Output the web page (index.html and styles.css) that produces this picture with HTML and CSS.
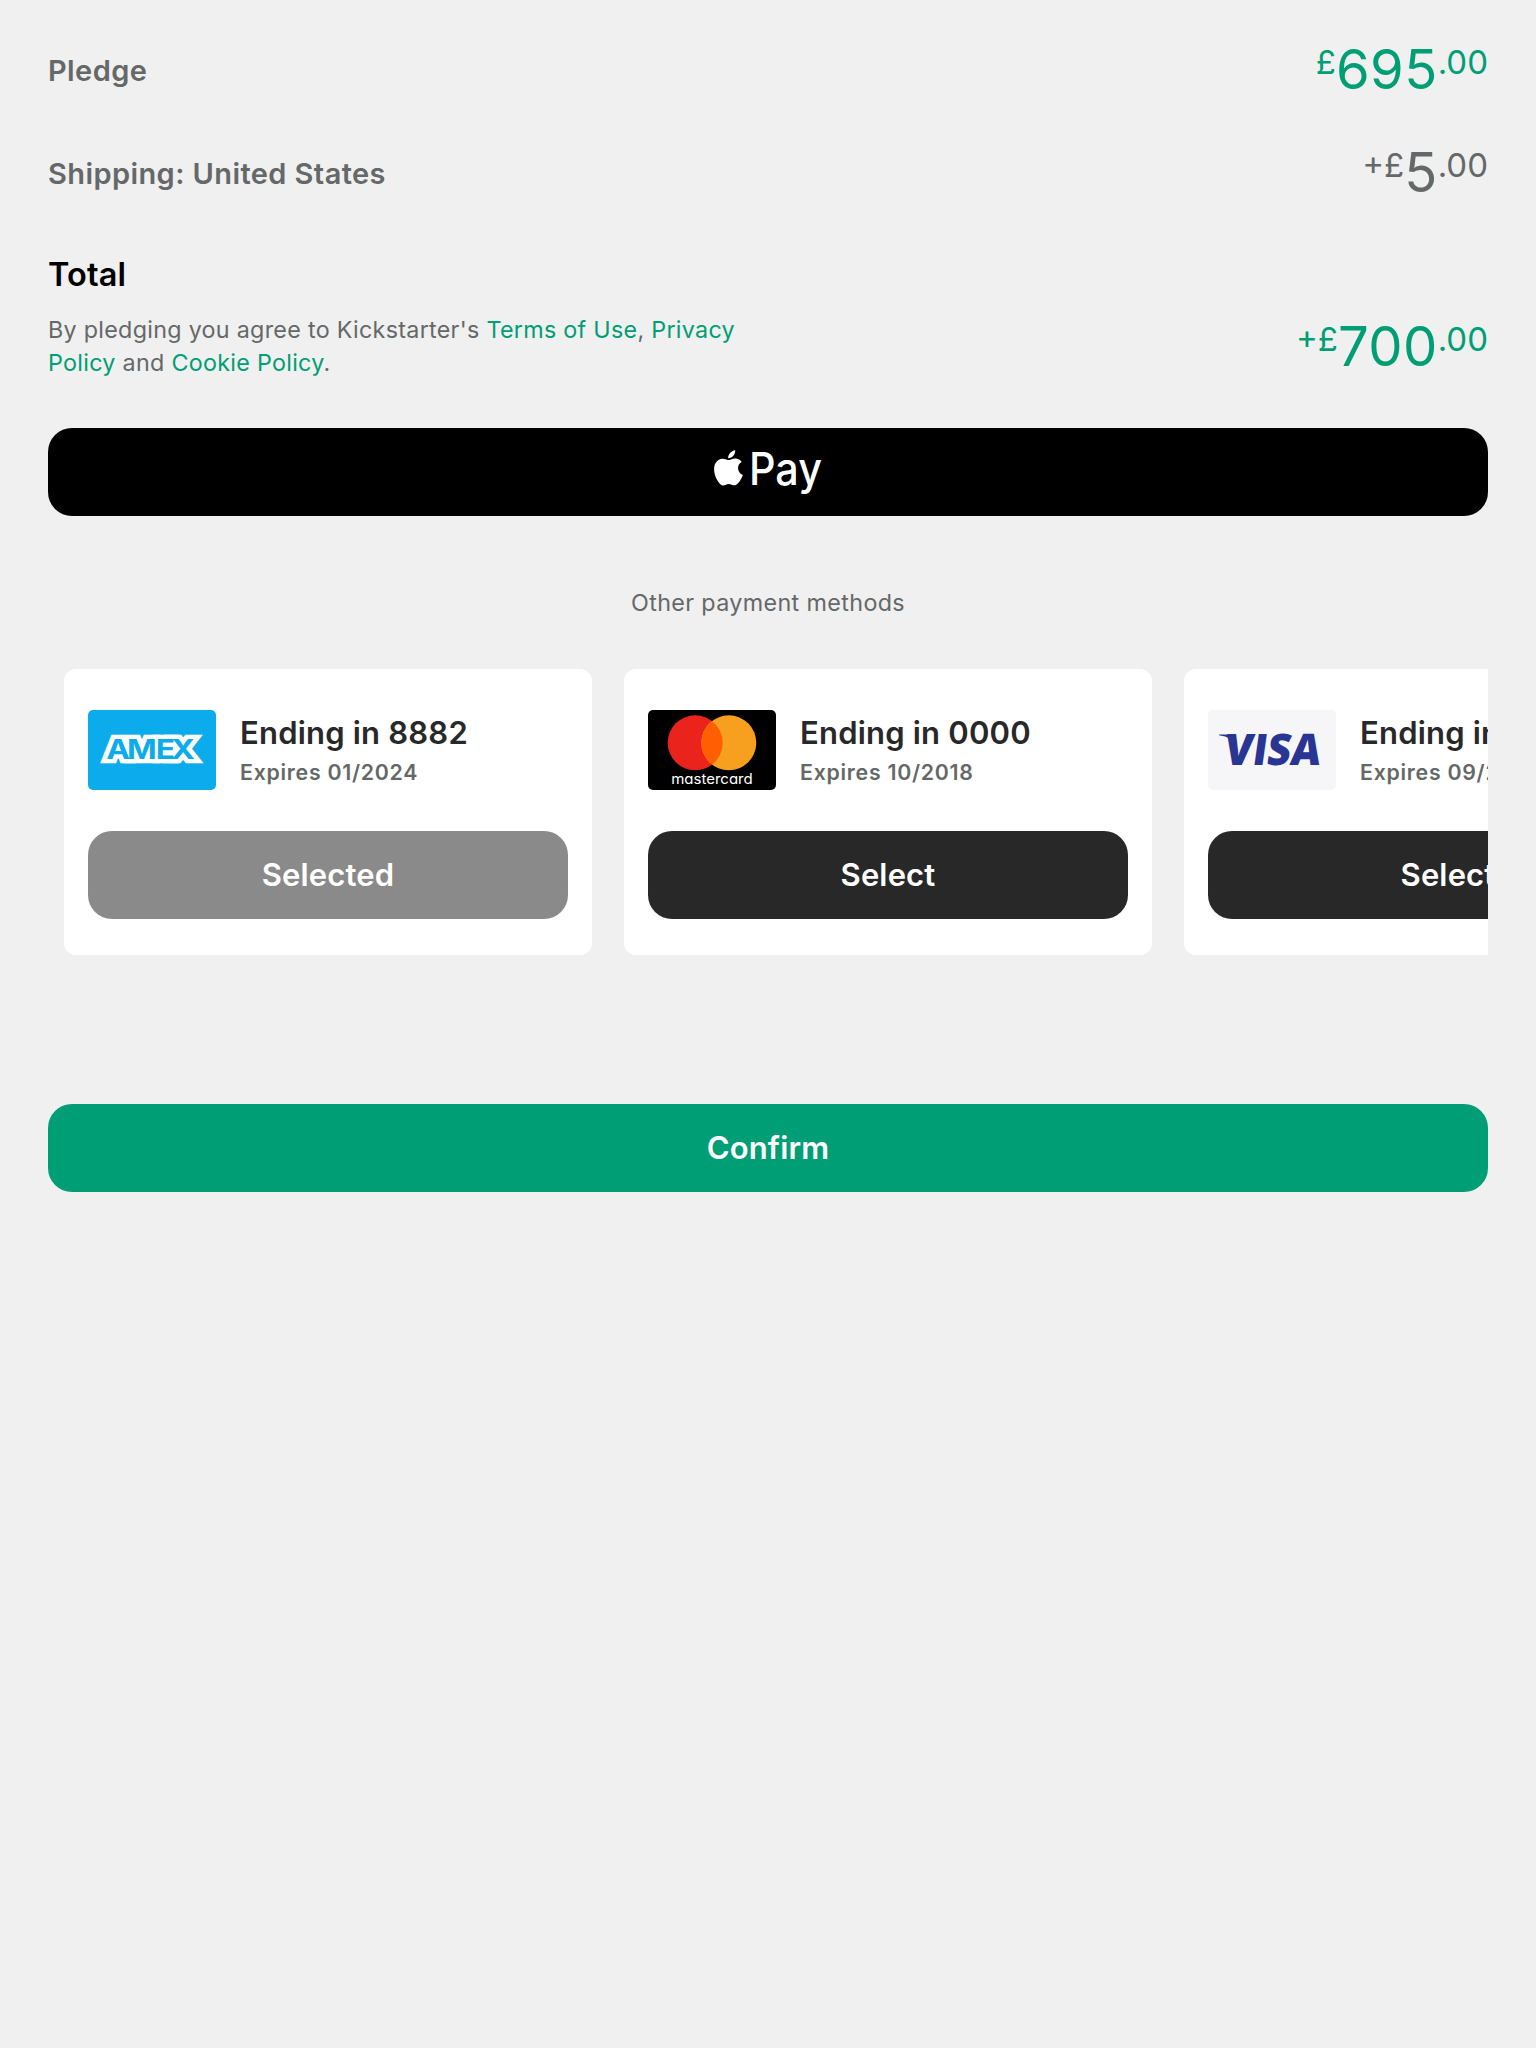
FILE: index.html
```
<!DOCTYPE html>
<html lang="en">
<head>
<meta charset="utf-8">
<title>Pledge summary</title>
<link rel="stylesheet" href="styles.css">
</head>
<body>
<main class="checkout">
  <section class="summary">
    <div class="summary-row">
      <span class="label">Pledge</span>
      <span class="amount amount-green"><span class="minor">£</span>695<span class="minor">.00</span></span>
    </div>
    <div class="summary-row">
      <span class="label">Shipping: United States</span>
      <span class="amount"><span class="minor">+£</span>5<span class="minor">.00</span></span>
    </div>
  </section>

  <section class="total">
    <h2 class="total-title">Total</h2>
    <div class="total-row">
      <p class="legal">By pledging you agree to Kickstarter's <a class="link">Terms of Use</a>, <a class="link">Privacy</a><br><a class="link">Policy</a> and <a class="link">Cookie Policy</a>.</p>
      <span class="amount amount-green"><span class="minor">+£</span>700<span class="minor">.00</span></span>
    </div>
  </section>

  <button class="button apple-pay" aria-label="Apple Pay">
    <svg class="apple-mark" viewBox="0 0 108 48" width="108" height="48" fill="#fff">
      <path d="M21.2 0.2C21.5 4.2 18.2 8.3 14.2 8.2C13.9 4.3 17.3 0.7 21.2 0.2ZM14.8 10.1C16.2 10.1 18.4 8.4 21.3 8.4C24.1 8.4 26.4 9.8 27.7 11.8C22.2 15 23.2 22.8 28.9 25C27.6 28.5 24.9 33.3 21.9 35C19.2 36.2 17.5 34 14.8 34C12.2 34 10.4 36.1 7.9 35.3C4.8 34.1 0.2 26.5 0.1 19.5C-0.1 12.8 4 8.7 8.6 8.7C11.3 8.7 13.4 10.1 14.8 10.1Z"/>
      <text class="pay-text" x="35" y="35" textLength="73" lengthAdjust="spacingAndGlyphs">Pay</text>
    </svg>
  </button>

  <p class="other">Other payment methods</p>

  <section class="cards">
    <article class="card">
      <div class="card-head">
        <svg class="brand" viewBox="0 0 128 80" width="128" height="80">
          <rect width="128" height="80" rx="5" fill="#0cacec"/>
          <g class="amex-text" transform="scale(1.16 1)">
            <text x="15.8 33.6 58.4 71.8" y="49.5" fill="#fff" stroke="#fff" stroke-width="8.5">AMEX</text>
            <text x="15.8 33.6 58.4 71.8" y="49.5" fill="#0cacec">AMEX</text>
          </g>
        </svg>
        <div class="card-info">
          <span class="card-number">Ending in 8882</span>
          <span class="card-expiry">Expires 01/2024</span>
        </div>
      </div>
      <button class="button select selected">Selected</button>
    </article>
    <article class="card">
      <div class="card-head">
        <svg class="brand" viewBox="0 0 128 80" width="128" height="80">
          <rect width="128" height="80" rx="5" fill="#000"/>
          <circle cx="47.2" cy="32.8" r="27.5" fill="#eb231d"/>
          <circle cx="80.8" cy="32.8" r="27.5" fill="#f79f1e"/>
          <path fill="#ff5f00" d="M64 11A27.5 27.5 0 0 1 64 54.6A27.5 27.5 0 0 1 64 11Z"/>
          <text class="mastercard-text" x="23.2" y="74.2" textLength="81.5" lengthAdjust="spacingAndGlyphs">mastercard</text>
        </svg>
        <div class="card-info">
          <span class="card-number">Ending in 0000</span>
          <span class="card-expiry">Expires 10/2018</span>
        </div>
      </div>
      <button class="button select">Select</button>
    </article>
    <article class="card">
      <div class="card-head">
        <svg class="brand" viewBox="0 0 128 80" width="128" height="80">
          <rect width="128" height="80" rx="5" fill="#f6f6f9"/>
          <path fill="#283593" d="M11 24.4H22Q25.5 24.4 26.3 28L28 36Q24.5 27 11 25.2Z"/>
          <text class="visa-text" transform="skewX(-8)" x="22.5" y="55.5" textLength="96.5" lengthAdjust="spacingAndGlyphs">VISA</text>
        </svg>
        <div class="card-info">
          <span class="card-number">Ending in 1111</span>
          <span class="card-expiry">Expires 09/2019</span>
        </div>
      </div>
      <button class="button select">Select</button>
    </article>
  </section>

  <button class="button confirm">Confirm</button>
</main>
</body>
</html>
```
FILE: styles.css
```
* {
  box-sizing: border-box;
}

body {
  margin: 0;
  min-height: 2048px;
  background: #f0f0f0;
  color: #656868;
  font-family: Inter, "Liberation Sans", sans-serif;
}

.checkout {
  display: flex;
  flex-direction: column;
  padding: 19px 48px 0;
}

.summary-row {
  display: flex;
  align-items: center;
  justify-content: space-between;
  height: 103px;
}

.label {
  font-size: 29px;
  font-weight: 600;
  letter-spacing: 0.41px;
  line-height: 40px;
}

.amount {
  height: 66px;
  margin-top: -2px;
  font-size: 54.4px;
  letter-spacing: 0.4px;
  line-height: 66px;
  white-space: nowrap;
}

.summary-row .amount {
  margin-top: -4px;
}

.amount-green,
.link {
  color: #009e74;
}

.minor {
  font-size: 33px;
  letter-spacing: 0;
  line-height: 0;
  vertical-align: 15.4px;
}

.total {
  padding-top: 30px;
}

.total-title {
  margin: 0 0 19px;
  color: #000;
  font-size: 32.5px;
  font-weight: 600;
  letter-spacing: 0.1px;
  line-height: 40px;
}

.total-row {
  display: flex;
  align-items: center;
  justify-content: space-between;
  height: 66px;
}

.legal {
  margin: -2px 0 0;
  font-size: 23.3px;
  letter-spacing: 0.29px;
  line-height: 33px;
  white-space: nowrap;
}

.button {
  display: flex;
  align-items: center;
  justify-content: center;
  height: 88px;
  padding: 0 0 2px;
  border: 0;
  border-radius: 24px;
  color: #fff;
  font-family: inherit;
  font-size: 31px;
  font-weight: 600;
  letter-spacing: 0.15px;
}

.apple-pay {
  margin-top: 48px;
  padding: 4px 0 0;
  background: #000;
}

.apple-mark {
  overflow: visible;
}

.pay-text {
  font-size: 45px;
  font-weight: 500;
  letter-spacing: 0;
}

.other {
  margin: 66px 0 46px;
  font-size: 23.3px;
  letter-spacing: 0.37px;
  line-height: 41px;
  text-align: center;
}

.cards {
  display: flex;
  gap: 32px;
  padding-left: 16px;
  overflow: hidden;
}

.card {
  flex: 0 0 528px;
  height: 286px;
  padding: 41px 24px 0;
  border-radius: 12px;
  background: #fff;
}

.card-head {
  display: flex;
  gap: 24px;
  height: 80px;
  margin-bottom: 41px;
}

.brand {
  flex: none;
}

.amex-text {
  font-size: 27.5px;
  font-weight: 700;
}

.mastercard-text {
  fill: #fff;
  font-size: 14.3px;
  font-weight: 400;
  font-feature-settings: "cv11";
}

.visa-text {
  fill: #283593;
  font-family: "Open Sans", sans-serif;
  font-size: 43.5px;
  font-weight: 800;
}

.card-info {
  display: flex;
  flex-direction: column;
  padding-top: 3px;
  white-space: nowrap;
}

.card-number {
  color: #282828;
  font-size: 31px;
  font-weight: 600;
  letter-spacing: 0.2px;
  line-height: 40px;
}

.card-expiry {
  font-size: 21.3px;
  font-weight: 600;
  letter-spacing: 0.74px;
  line-height: 38px;
}

.select {
  width: 480px;
  background: #282828;
}

.selected {
  background: #8a8a8a;
}

.confirm {
  margin-top: 149px;
  background: #009e74;
}
```
